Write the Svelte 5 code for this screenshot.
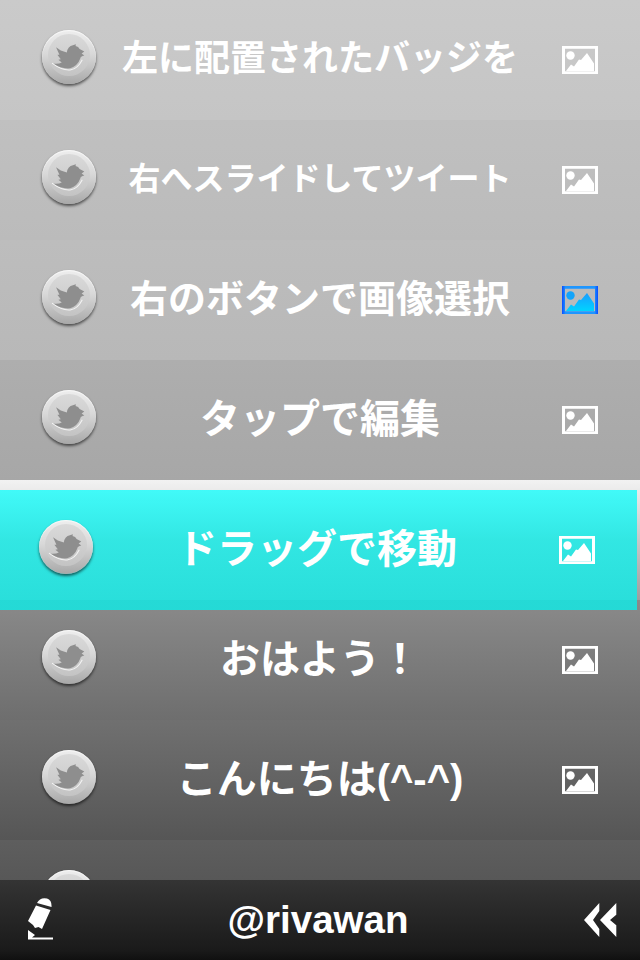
<script>
  const rows = [
    { text: '左に配置されたバッジを', size: 36, bg: 'a' },
    { text: '右へスライドしてツイート', size: 32, bg: 'b' },
    { text: '右のボタンで画像選択', size: 38, bg: 'c', active: true },
    { text: 'タップで編集', size: 40, bg: 'd' },
    { text: '', size: 40, bg: 'gap', empty: true },
    { text: 'おはよう！', size: 40, bg: 'e' },
    { text: 'こんにちは(^-^)', size: 40, bg: 'f' },
    { text: '', size: 40, bg: 'g' }
  ];
</script>

{#snippet badge()}
  <span class="badge">
    <span class="lens"></span>
    <svg class="bird" viewBox="90 100 110 85" aria-hidden="true">
      <path class="curve" d="M96 160 Q125 182 150 180 Q172 178 186 150" />
      <path class="birdfill" d="M108 113 L122 122 L140 128 Q143 110 158 107 L167 104 L166 109 Q175 110 178 118 L192 125 L184 131 L192 137 Q180 140 180 146 Q172 168 150 175 Q125 178 100 161 Q115 163 125 158 L115 150 L122 148 L112 135 L118 135 Z" />
    </svg>
  </span>
{/snippet}

{#snippet picture(active)}
  <svg class="pic" viewBox="0 0 36 28" aria-hidden="true">
    {#if active}
      <defs>
        <linearGradient id="frame" x1="0" y1="0" x2="1" y2="0">
          <stop offset="0" stop-color="#0a4cff" />
          <stop offset=".1" stop-color="#1e96ff" />
          <stop offset=".9" stop-color="#1e96ff" />
          <stop offset="1" stop-color="#0a4cff" />
        </linearGradient>
        <linearGradient id="blue" x1="0" y1="0" x2="0" y2="1">
          <stop offset="0" stop-color="#1a9cff" />
          <stop offset="1" stop-color="#00d4ff" />
        </linearGradient>
      </defs>
    {/if}
    <path fill-rule="evenodd" fill={active ? 'url(#frame)' : '#fff'} d="M0 0H36V28H0Z M3 2.7V25.3H33V2.7Z" />
    <circle cx="8.5" cy="9.5" r="4.2" fill={active ? '#12a4fa' : '#fff'} />
    <path fill={active ? 'url(#blue)' : '#fff'} d="M4 25 L9 18.5 L12 20.5 L17 13.5 L19 14 L25 7 L32 17.5 V25 Z" />
  </svg>
{/snippet}

<div class="screen">
  <div class="list">
    {#each rows as row}
      <div class="row {row.bg}">
        {#if !row.empty}
          <div class="left">{@render badge()}</div>
          <div class="label" style="font-size:{row.size}px">{row.text}</div>
          <div class="right">{@render picture(row.active)}</div>
        {/if}
      </div>
    {/each}
  </div>

  <div class="row dragged">
    <div class="left">{@render badge()}</div>
    <div class="label" style="font-size:40px">ドラッグで移動</div>
    <div class="right">{@render picture(false)}</div>
  </div>

  <div class="footer">
    <svg class="pencil" viewBox="25 900 30 44" aria-hidden="true">
      <path fill="#fff" d="M37 905 Q40 899 47 900.5 Q52 902 51.5 909 Z" />
      <path fill="#fff" d="M36 907.5 L50.5 912 L42 931 L38.5 929 L35 930 L33 927 L28 923 Z" />
      <path fill="#fff" d="M28 932 L35 937 L32 939.5 H53 V941.5 H28 Z" />
    </svg>
    <div class="handle">@rivawan</div>
    <svg class="back" viewBox="0 0 34 34" aria-hidden="true">
      <path fill="#fff" d="M0 17 L15.3 0 V8 L9 17 L15.3 26 V34 Z" />
      <path fill="#fff" d="M16 17 L32.3 0 V11.7 L26 17 L32.3 22.3 V34 Z" />
    </svg>
  </div>
</div>

<style>
  :global(body) { margin: 0; background: #888; }
  .screen {
    position: relative;
    width: 640px;
    height: 960px;
    overflow: hidden;
    font-family: "Liberation Sans", "Noto Sans CJK JP", sans-serif;
    font-weight: 700;
    color: #fff;
  }
  .list { display: flex; flex-direction: column; }
  .row {
    height: 120px;
    flex: none;
    display: grid;
    grid-template-columns: 120px 1fr 120px;
    align-items: center;
  }
  .a { background: linear-gradient(#cacaca, #c5c5c5); }
  .b { background: linear-gradient(#c0c0c0, #bbbbbb); }
  .c { background: linear-gradient(#bdbdbd, #b8b8b8); }
  .d { background: linear-gradient(#aeaeae, #a7a7a7); }
  .gap { background: linear-gradient(#f2f2f2, #9e9e9e); }
  .e { background: linear-gradient(#8a8a8a, #6e6e6e); }
  .f { background: linear-gradient(#707070, #565656); }
  .g { background: linear-gradient(#5e5e5e, #4a4a4a); }
  .left { padding-left: 42px; display: flex; margin-top: -7px; }
  .right { padding-left: 42px; display: flex; }
  .label {
    text-align: center;
    white-space: nowrap;
    line-height: 1;
    margin: -2px -20px 0;
  }
  .badge {
    position: relative;
    display: block;
    width: 54px;
    height: 54px;
    border-radius: 50%;
    background: linear-gradient(#eeeeee, #d8d8d8 45%, #a8a8a8);
    box-shadow: 0 2px 3px rgba(0, 0, 0, .6), inset 0 1px 1px rgba(255, 255, 255, .7);
  }
  .lens {
    position: absolute;
    left: 6px;
    top: 4px;
    width: 42px;
    height: 42px;
    border-radius: 50%;
    background: linear-gradient(#dadada, #c4c4c4);
  }
  .bird {
    position: absolute;
    left: 8px;
    top: 13px;
    width: 37px;
    height: 28.6px;
  }
  .birdfill { fill: #8e8e8e; }
  .curve { fill: none; stroke: #f4f4f4; stroke-width: 3; }
  .pic { display: block; width: 36px; height: 28px; }
  .dragged {
    position: absolute;
    left: -3px;
    top: 490px;
    width: 640px;
    background: linear-gradient(rgba(8, 255, 253, .75), rgba(0, 241, 236, .75) 42%, rgba(3, 245, 240, .75));
  }
  .footer {
    position: absolute;
    left: 0;
    right: 0;
    bottom: 0;
    height: 80px;
    background: linear-gradient(#343434, #1a1a1a 88%, #101010);
    display: grid;
    grid-template-columns: 120px 1fr 120px;
    align-items: center;
  }
  .pencil { display: block; width: 30px; height: 44px; margin-left: 25px; }
  .back { display: block; width: 34px; height: 34px; margin-left: 64px; }
  .handle { text-align: center; font-size: 38.5px; line-height: 1; padding-right: 4px; }
</style>
